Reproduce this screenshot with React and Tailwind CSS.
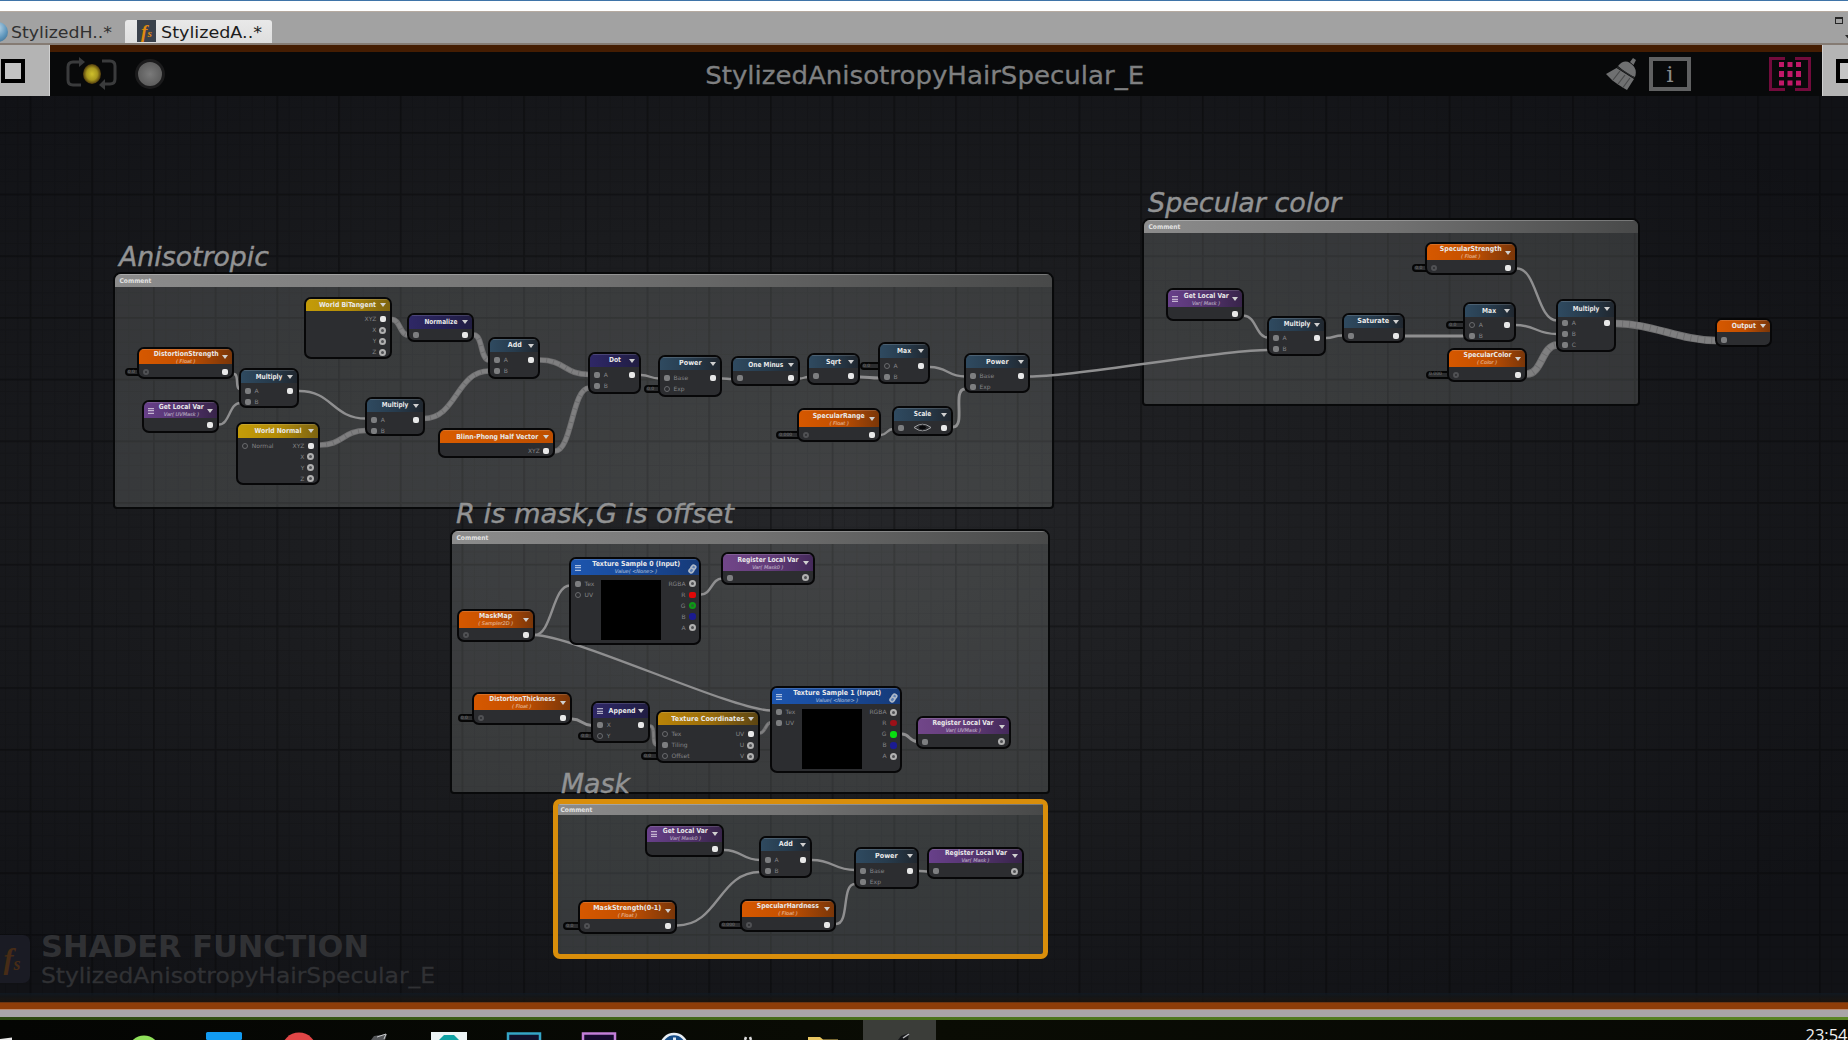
import { useLayoutEffect, useRef } from 'react';

/* Text squeezed or stretched horizontally to an exact width. */
function FitText({ w, origin = 'center', className = '', children }) {
  const inner = useRef(null);
  useLayoutEffect(() => {
    inner.current.style.transform = 'none';
    const real = inner.current.getBoundingClientRect().width;
    if (real) inner.current.style.transform = `scaleX(${w / real})`;
  }, [w]);
  return (
    <span
      style={{ width: w }}
      className={`flex shrink-0 whitespace-nowrap leading-none ${origin === 'left' ? 'justify-start' : 'justify-center'} ${className}`}
    >
      <span ref={inner} className={`block shrink-0 ${origin === 'left' ? 'origin-left' : 'origin-center'}`}>
        {children}
      </span>
    </span>
  );
}

const HEADS = {
  orange: 'bg-linear-to-r from-[#d65800] via-[#c45000] to-[#7a3608]',
  bright: 'bg-linear-to-r from-[#d95c00] to-[#bd4e00]',
  yellow: 'bg-linear-to-r from-[#c49c08] via-[#b38c08] to-[#7d6410]',
  gold: 'bg-linear-to-r from-[#b98409] via-[#9c6e0a] to-[#5c4512]',
  purple: 'bg-linear-to-r from-[#68408a] via-[#54346f] to-[#38244a]',
  violet: 'bg-linear-to-r from-[#714689] via-[#643d7a] to-[#44295a]',
  navy: 'bg-linear-to-r from-[#2f2866] via-[#272256] to-[#211d42]',
  slate: 'bg-linear-to-r from-[#2f4a60] via-[#273c4e] to-[#20272f]',
  blue: 'bg-linear-to-r from-[#1d55ae] via-[#184a99] to-[#163a78]',
};

/* Port kinds: f = connected input, o = open input, d = dim open input, s = connected output, r = open output */
const PORTS = {
  f: 'h-[6px] w-[6px] rounded-[2px] bg-[#7d7e80]',
  o: 'h-[6px] w-[6px] rounded-full border-[1.5px] border-[#6a6b6e]',
  d: 'h-[6px] w-[6px] rounded-full border-2 border-[#505154]',
  s: 'h-[6px] w-[6px] rounded-[2px] bg-[#e8e8e8]',
  r: 'h-[7px] w-[7px] rounded-full border-2 border-[#b0b0b0] bg-[#505154]',
  red: 'h-[6px] w-[7px] rounded-[2px] bg-[#e00808]',
  dred: 'h-[6px] w-[7px] rounded-full bg-[#9c1018]',
  grn: 'h-[7px] w-[7px] rounded-full border-2 border-[#0c9a16] bg-[#2a662c]',
  bgrn: 'h-[7px] w-[7px] rounded-[3px] bg-[#08dd10]',
  blu: 'h-[7px] w-[7px] rounded-[3px] bg-[#1b1b92]',
};

const N = (x0, y0, x1, y1, hb, head, title, tw, o = {}) => ({ x0, y0, x1, y1, hb, head, title, tw, ...o });
const AB = [['f', 'A'], ['f', 'B']];
const S = [['s']];
const texOut = (r, g) => [['r', 'RGBA'], [r, 'R'], [g, 'G'], ['blu', 'B'], ['r', 'A']];

const NODES = [
  N(137.3, 347, 234.3, 378.7, 364, 'orange', 'DistortionStrength', 65, { sub: '( Float )', ins: [['d']], outs: S, stub: [12.5, 0] }),
  N(141.7, 400, 219.3, 432.7, 418, 'purple', 'Get Local Var', 45, { sub: 'Var( UVMask )', menu: 1, outs: S, first: 7 }),
  N(239, 368.3, 299, 408, 383.3, 'slate', 'Multiply', 26.5, { ins: AB, outs: S }),
  N(236.3, 422.3, 320, 484.7, 437.7, 'yellow', 'World Normal', 47, { ins: [['o', 'Normal']], outs: [['s', 'XYZ'], ['r', 'X'], ['r', 'Y'], ['r', 'Z']] }),
  N(303.7, 296.7, 392, 359, 311.3, 'yellow', 'World BiTangent', 57, { outs: [['s', 'XYZ'], ['r', 'X'], ['r', 'Y'], ['r', 'Z']] }),
  N(365.3, 396.7, 424.7, 436.3, 411.7, 'slate', 'Multiply', 26.5, { ins: AB, outs: S }),
  N(407.3, 312.7, 473.7, 342, 328.7, 'navy', 'Normalize', 33, { ins: [['f']], outs: S, first: 6.5 }),
  N(488.3, 336.7, 540.3, 378.7, 352, 'slate', 'Add', 14, { ins: AB, outs: S }),
  N(588.3, 351.7, 640.7, 393.7, 367, 'navy', 'Dot', 12, { ins: AB, outs: S }),
  N(438.3, 428, 555.3, 458, 443.3, 'bright', 'Blinn-Phong Half Vector', 82, { outs: [['s', 'XYZ']], first: 7.3 }),
  N(658, 354.7, 722, 397, 370, 'slate', 'Power', 22.5, { ins: [['f', 'Base'], ['o', 'Exp']], outs: S, stub: [14, 1] }),
  N(731, 356, 800, 386, 371.3, 'slate', 'One Minus', 35, { ins: [['f']], outs: S, first: 7 }),
  N(807.3, 353, 860, 384.7, 368.3, 'slate', 'Sqrt', 15, { ins: [['f']], outs: S }),
  N(878, 342.3, 930.3, 384.3, 357.7, 'slate', 'Max', 14, { ins: [['o', 'A'], ['f', 'B']], outs: S, stub: [18, 0], first: 8.8 }),
  N(964, 353, 1029.7, 393.3, 368.3, 'slate', 'Power', 22.5, { ins: [['f', 'Base'], ['f', 'Exp']], outs: S }),
  N(797.3, 408.3, 881, 441.7, 427, 'orange', 'SpecularRange', 52, { sub: '( Float )', ins: [['d']], outs: S, stub: [21, 0] }),
  N(892, 405.7, 953, 435.7, 420.7, 'slate', 'Scale', 17.5, { ins: [['f']], outs: S, eye: 1, first: 7.3 }),

  N(1166, 288.3, 1244, 321.3, 307, 'purple', 'Get Local Var', 45, { sub: 'Var( Mask )', menu: 1, outs: S, first: 7 }),
  N(1267, 315.7, 1326.3, 356, 331.3, 'slate', 'Multiply', 26.5, { ins: AB, outs: S, first: 7 }),
  N(1341.7, 312.7, 1405, 342.7, 328, 'slate', 'Saturate', 32, { ins: [['f']], outs: S }),
  N(1424.7, 242.3, 1517, 274.7, 260.3, 'orange', 'SpecularStrength', 62, { sub: '( Float )', ins: [['d']], outs: S, stub: [12.5, 0], first: 7.5 }),
  N(1463.3, 302.3, 1515.7, 342, 317.3, 'slate', 'Max', 14, { ins: [['o', 'A'], ['f', 'B']], outs: S, stub: [17, 0] }),
  N(1447, 348.3, 1527.3, 381.7, 366.7, 'orange', 'SpecularColor', 48, { sub: '( Color )', ins: [['d']], outs: S, stub: [21, 0] }),
  N(1556.3, 299, 1616, 352, 316.7, 'slate', 'Multiply', 26.5, { ins: [['f', 'A'], ['f', 'B'], ['f', 'C']], outs: S, first: 6.3 }),
  N(1715.3, 317.7, 1771.7, 346.7, 332.3, 'orange', 'Output', 24, { ins: [['f']] }),

  N(456.7, 609.3, 534.7, 642.3, 627.7, 'orange', 'MaskMap', 33, { sub: '( Sampler2D )', ins: [['d']], outs: S, first: 7 }),
  N(569, 557, 701, 645.3, 575.3, 'blue', 'Texture Sample 0 (Input)', 88, { sub: 'Value( <None> )', menu: 1, link: 1, img: 1, ins: [['f', 'Tex'], ['o', 'UV']], outs: texOut('red', 'grn'), first: 8.7 }),
  N(720.7, 552.3, 815, 585.3, 571, 'violet', 'Register Local Var', 61, { sub: 'Var( Mask0 )', ins: [['f']], outs: [['r']], first: 7 }),
  N(471.7, 692, 572, 725, 710, 'orange', 'DistortionThickness', 66, { sub: '( Float )', ins: [['d']], outs: S, stub: [14, 0] }),
  N(591.3, 701, 650, 743.3, 718.3, 'navy', 'Append', 27, { menu: 1, ins: [['f', 'X'], ['o', 'Y']], outs: S, stub: [13, 1], first: 6.8 }),
  N(656, 710.3, 759.7, 762.7, 725.3, 'gold', 'Texture Coordinates', 73, { ins: [['o', 'Tex'], ['f', 'Tiling'], ['o', 'Offset']], outs: [['s', 'UV'], ['r', 'U'], ['r', 'V']], stub: [15, 2], first: 8.8 }),
  N(770, 686, 902, 773.3, 704, 'blue', 'Texture Sample 1 (Input)', 88, { sub: 'Value( <None> )', menu: 1, link: 1, img: 1, ins: [['f', 'Tex'], ['f', 'UV']], outs: texOut('dred', 'bgrn') }),
  N(915.7, 716, 1011, 749.3, 734, 'violet', 'Register Local Var', 61, { sub: 'Var( UVMask )', ins: [['f']], outs: [['r']], first: 7.5 }),

  N(645.3, 823.7, 723.7, 857, 842.3, 'purple', 'Get Local Var', 45, { sub: 'Var( Mask0 )', menu: 1, outs: S, first: 7 }),
  N(759, 835.7, 812, 878.3, 851.3, 'slate', 'Add', 14, { ins: AB, outs: S, first: 8.6 }),
  N(854.3, 846.7, 918.7, 889.3, 862.7, 'slate', 'Power', 22.5, { ins: [['f', 'Base'], ['f', 'Exp']], outs: S }),
  N(927.3, 846.7, 1023.7, 878.7, 863.3, 'purple', 'Register Local Var', 62, { sub: 'Var( Mask )', ins: [['f']], outs: [['r']] }),
  N(578.3, 900, 676.7, 934, 919, 'orange', 'MaskStrength(0-1)', 68, { sub: '( Float )', ins: [['d']], outs: S, stub: [15, 0], first: 7 }),
  N(740, 898.7, 836, 932.3, 917.3, 'orange', 'SpecularHardness', 62, { sub: '( Float )', ins: [['d']], outs: S, stub: [21, 0] }),
];

/* x1, y1, x2, y2, thickness, optional curve strength */
const WIRES = [
  [234, 374, 240, 389, 2], [219, 424.5, 240, 403, 2], [299, 391, 366, 418.5, 2],
  [320, 445, 366, 430.5, 6], [392, 319.5, 408, 335, 6], [424, 418.5, 489, 371, 6],
  [474, 335, 489, 360, 6], [540, 360, 589, 374.5, 6], [555, 451, 589, 388, 6],
  [641, 375, 659, 378.5, 2], [722, 378.5, 732, 379, 2], [800, 378.5, 808, 377, 2],
  [860, 377, 879, 378, 2.5], [930, 367, 965, 376.5, 2], [881, 435, 893, 429, 2],
  [953, 427, 965, 389, 2.5], [1029, 376.5, 1268, 350, 2, 0.22], [1244, 315.7, 1268, 337.5, 2],
  [1326, 338, 1342, 335.5, 2], [1405, 336, 1464, 336, 2.4], [1517, 268.5, 1557, 320.5, 2],
  [1515, 325, 1557, 334, 2], [1527, 374, 1557, 345, 8], [1616, 323.5, 1716, 340.5, 8, 0.36],
  [534.5, 635, 570, 585.5, 2], [534.5, 635, 771, 710.5, 2, 0.16], [701, 594.5, 722, 578.5, 2],
  [572, 719, 592, 725.5, 2.4], [650, 726, 657, 745, 4], [760, 733, 771, 722.5, 4],
  [902, 734, 917, 741.5, 2.4], [724, 850, 760, 860, 2], [812, 860, 855, 870, 2],
  [677, 925.5, 760, 872, 2], [836, 924, 855, 884, 2], [919, 871, 929, 871.5, 2],
];

function Wires() {
  return (
    <svg className="absolute left-0 top-0 h-[1040px] w-[1848px]" viewBox="0 0 1848 1040" fill="none">
      {WIRES.map(([a, b, c, d, t, s = 0.5], i) => {
        const k = Math.max((c - a) * s, Math.min(Math.abs(d - b) * 0.35, 14));
        const p = `M${a} ${b}C${a + k} ${b} ${c - k} ${d} ${c} ${d}`;
        return t >= 4 ? (
          <g key={i}>
            <path d={p} stroke="#6e6e6f" strokeWidth={t - 0.3} />
            <path d={p} stroke="#7f7f80" strokeWidth={t - 2} strokeDasharray="6 1" />
          </g>
        ) : (
          <path key={i} d={p} stroke="#8f8f90" strokeWidth={t + 0.4} />
        );
      })}
    </svg>
  );
}

function Port({ kind, label, right }) {
  return (
    <div className={`flex h-[11px] items-center gap-[3px] ${right ? 'flex-row-reverse' : ''}`}>
      <span className="flex w-[7px] justify-center">
        <span className={`block ${PORTS[kind]}`} />
      </span>
      {label && <span className="text-[6px] leading-none text-[#838487]">{label}</span>}
    </div>
  );
}

function Node({ n }) {
  const { x0, y0, x1, y1, hb, first = 8 } = n;
  return (
    <div className="absolute" style={{ left: x0, top: y0, width: x1 - x0, height: y1 - y0 }}>
      {n.stub && (
        <div
          className="absolute right-full mr-[-3px] flex h-[8px] items-center rounded-l-[4px] border-2 border-[#060606] bg-[#2c2d2f] pl-[1px] text-[4.5px] leading-none text-[#77787a]"
          style={{ width: n.stub[0] + 3, top: hb - y0 + first - 4 + n.stub[1] * 11 }}
        >
          {n.stub[0] > 18 ? '0.000' : '0.0'}
        </div>
      )}
      <div className="relative flex h-full flex-col overflow-hidden rounded-[7px] border-2 border-[#070708] bg-[#2c2d30]">
        <div
          className={`flex shrink-0 items-center justify-center border-t border-white/15 ${HEADS[n.head]}`}
          style={{ height: hb - y0 - 2 }}
        >
          {n.menu && (
            <span className="absolute left-[4px] flex h-[6px] w-[6px] flex-col justify-between bg-white/15">
              <i className="h-px bg-white/55" />
              <i className="h-px bg-white/55" />
              <i className="h-px bg-white/55" />
            </span>
          )}
          <div className={`flex flex-col items-center ${n.menu ? 'pl-[2px]' : ''}`}>
            <FitText w={n.tw} className="text-[7px] font-bold text-[#e9e9e9]">{n.title}</FitText>
            {n.sub && <span className="text-[5px] italic leading-[6px] text-white/65">{n.sub}</span>}
          </div>
          {n.link ? (
            <svg className="absolute right-[2px] top-[5px] h-[10px] w-[9px]" viewBox="0 0 9 10" fill="#5c7fb4" stroke="#aeb9c8" strokeWidth="1.6">
              <rect x="3.4" y="1.2" width="4" height="4.6" rx="1.6" transform="rotate(38 5.4 3.5)" />
              <rect x="1.4" y="4.2" width="4" height="4.6" rx="1.6" transform="rotate(38 3.4 6.5)" />
            </svg>
          ) : (
            <svg className="absolute right-[4px] h-[4px] w-[6px]" viewBox="0 0 6 4">
              <path d="M0 0H6L3 4Z" fill="#d0d0d0" />
            </svg>
          )}
        </div>
        <div className="flex grow justify-between px-[3.5px]" style={{ paddingTop: first - 5.5 }}>
          <div>{(n.ins || []).map(([k, l], i) => <Port key={i} kind={k} label={l} />)}</div>
          {n.eye && (
            <svg className="mt-[1px] h-[9px] w-[19px]" viewBox="0 0 19 9" fill="none" stroke="#a5a6a8">
              <path d="M1 4.5Q9.500 -2 18 4.500Q9.500 11 1 4.500Z" />
              <ellipse cx="9.500" cy="4.500" rx="4" ry="2.500" fill="#08080a" stroke="#303134" />
            </svg>
          )}
          {n.img && <div className="mt-[2px] h-[60px] w-[60px] bg-black" />}
          <div>{(n.outs || []).map(([k, l], i) => <Port key={i} kind={k} label={l} right />)}</div>
        </div>
      </div>
    </div>
  );
}

const GROUPS = [
  { x: 113, y: 272, w: 941, h: 237, hh: 15, title: 'Anisotropic', tw: 150 },
  { x: 1142, y: 218, w: 498, h: 188, hh: 15, title: 'Specular color', tw: 193 },
  { x: 450, y: 529, w: 600, h: 265, hh: 15, title: 'R is mask,G is offset', tw: 278 },
  { x: 553, y: 799, w: 495, h: 160, hh: 16, title: 'Mask', tw: 69, active: true },
];

function Group({ g }) {
  return (
    <div className="absolute" style={{ left: g.x, top: g.y, width: g.w, height: g.h }}>
      <div
        className={`flex h-full flex-col overflow-hidden ${
          g.active
            ? 'rounded-[7px] border-[5px] border-[#d98e0b] bg-[#c8d0cc]/18'
            : 'rounded-t-[8px] rounded-b-[4px] border-2 border-[#08090a] bg-[#d2d6d2]/17'
        }`}
      >
        <div
          className={`flex shrink-0 items-center border-t border-white/25 bg-linear-to-r from-[#8c8c8c] via-[#727272] to-[#484949] ${g.active ? 'pl-[2px]' : 'pl-[4px]'}`}
          style={{ height: g.active ? g.hh - 5 : g.hh - 2 }}
        >
          <FitText w={32} className="text-[6.5px] font-bold text-[#e2e2e2]">Comment</FitText>
        </div>
      </div>
      <div className={`absolute bottom-full h-[32px] ${g.active ? 'left-[8px] mb-[-4px]' : 'left-[5.500px] mb-[-4px]'}`}>
        <FitText w={g.tw} origin="left" className="text-[26px] italic text-[#929394] [-webkit-text-stroke:0.4px_#929394]">{g.title}</FitText>
      </div>
    </div>
  );
}

function Grid() {
  return (
    <svg className="absolute left-0 top-0 h-[1040px] w-[1848px]">
      <defs>
        <pattern id="minor" x="29.6" y="8.5" width="12.34" height="12.34" patternUnits="userSpaceOnUse">
          <path d="M0.500 0V12.34M0 0.500H12.34" stroke="#000" strokeOpacity=".11" />
        </pattern>
        <pattern id="major" x="29.6" y="8.5" width="61.7" height="61.7" patternUnits="userSpaceOnUse">
          <path d="M1 0V61.7M0 1H61.7" stroke="#000" strokeOpacity=".24" strokeWidth="2" />
        </pattern>
      </defs>
      <rect width="1848" height="1040" fill="url(#minor)" />
      <rect width="1848" height="1040" fill="url(#major)" />
    </svg>
  );
}

function FsGlyph({ className }) {
  return (
    <span className={`flex items-center justify-center font-['Liberation_Serif',serif] font-bold italic leading-none ${className}`}>
      f<span className="mt-[0.5em] text-[0.6em]">s</span>
    </span>
  );
}

function TabBar() {
  return (
    <div className="flex h-[32px] shrink-0 items-end justify-between border-t border-[#b5aaa0] bg-[#a2a2a2]">
      <div className="flex h-[23px] items-center">
        <span className="-ml-[14px] h-[20px] w-[22px] rounded-full bg-radial-[at_55%_30%] from-[#b9d4e6] via-[#5f97bd] to-[#2d5674]" />
        <FitText w={101} origin="left" className="ml-[3px] pt-[2px] text-[16px] text-[#303030]">StylizedH..*</FitText>
        <div className="ml-[13px] flex h-[23px] w-[147px] items-center rounded-t-[3px] bg-linear-to-b from-[#e9e9e9] to-[#dedede] pl-[12px]">
          <FsGlyph className="-mt-[1px] h-[22px] w-[19px] bg-[#3a414b] text-[19px] text-[#e08a10]" />
          <FitText w={101} origin="left" className="ml-[5px] pt-[2px] text-[16px] text-[#1c1c1c]">StylizedA..*</FitText>
        </div>
      </div>
      <div className="flex h-[32px] w-[13px] flex-col pt-[6px]">
        <span className="h-[7px] w-[8px] border border-t-2 border-[#262626]" />
        <svg className="mt-[11px] ml-[10px] h-[4px] w-[7px]" viewBox="0 0 7 4"><path d="M0 0H7L3.500 4Z" fill="#262626" /></svg>
      </div>
    </div>
  );
}

function Toolbar() {
  return (
    <div className="relative z-10 flex h-[51px] shrink-0 items-start">
      <div className="flex h-[51px] w-[50px] shrink-0 border-r border-[#d0d0d0] bg-[#b4b4b4] pl-[1px] pt-[14px]">
        <span className="h-[24px] w-[24px] border-4 border-black bg-[#c4c4c4]" />
      </div>
      <div className="flex h-[51px] grow items-center border-t-[7px] border-[#451d02] bg-[#08090a]">
        <svg className="ml-[14px] h-[34px] w-[56px]" viewBox="0 0 56 34" fill="none" stroke="#3a3b3c" strokeWidth="3">
          <path d="M17 28H9Q4 28 4 23V10Q4 5 9 5H17" />
          <path d="M15 0L21 5L15 10Z" fill="#3a3b3c" stroke="none" />
          <path d="M38 4H46Q51 4 51 9V22Q51 27 46 27H40" />
          <path d="M41 22L35 28L41 33Z" fill="#3a3b3c" stroke="none" />
          <defs>
            <radialGradient id="sun">
              <stop offset="0" stopColor="#cfc02c" />
              <stop offset=".6" stopColor="#a8981f" />
              <stop offset="1" stopColor="#4f3a0c" />
            </radialGradient>
          </defs>
          <ellipse cx="28" cy="17" rx="9" ry="10" fill="url(#sun)" stroke="none" />
        </svg>
        <span className="ml-[15px] h-[30px] w-[30px] rounded-full border-[3px] border-[#1b1b1c] bg-radial from-[#7a7a7a] to-[#525252]" />
        <div className="flex grow justify-center pt-[3px] pl-[78px]">
          <FitText w={439} className="text-[25px] text-[#7f8081] [-webkit-text-stroke:0.3px_#7f8081]">StylizedAnisotropyHairSpecular_E</FitText>
        </div>
        <svg className="h-[34px] w-[31px]" viewBox="0 0 31 34" fill="#6f7071">
          <path d="M24 5L27 1L30 3L27.500 8Z" />
          <path d="M12 9Q18 2 24 6Q32 11 29 20Q22 18 12 9Z" />
          <path d="M10.500 11L28 22L21 33L17.500 31L12 27.500L6.500 23.500L0 17Z" />
          <path d="M11 10L28.500 21" stroke="#2a2b2c" strokeWidth="1.200" />
          <path d="M7 23L14 14M12 27L19 18M17 30.500L24 21" stroke="#4a4b4c" strokeWidth="1.200" />
        </svg>
        <div className="ml-[12px] flex h-[34px] w-[42px] items-center justify-center border-4 border-[#606162] font-['DejaVu_Serif',serif] text-[23px] leading-none text-[#8a8b8c]">
          i
        </div>
        <svg className="mr-[11px] ml-[78px] h-[34px] w-[42px]" viewBox="0 0 42 34">
          <path d="M16 1.500H1.500V32.500H16M26 1.500H40.500V32.500H26" fill="none" stroke="#720b3c" strokeWidth="3" />
          <g fill="#c01868">
            <rect x="10" y="5" width="5" height="5" /><rect x="18.500" y="5" width="5" height="5" /><rect x="27" y="5" width="5" height="5" />
            <rect x="10" y="14" width="5" height="6" /><rect x="18.500" y="14" width="5" height="6" /><rect x="27" y="14" width="5" height="6" />
            <rect x="10" y="23.500" width="5" height="5" /><rect x="18.500" y="23.500" width="5" height="5" /><rect x="27" y="23.500" width="5" height="5" />
          </g>
        </svg>
      </div>
      <div className="flex h-[51px] w-[26px] shrink-0 overflow-hidden border-l border-[#d0d0d0] bg-[#b4b4b4] pl-[13px] pt-[14px]">
        <span className="h-[24px] w-[24px] shrink-0 border-4 border-black bg-[#c4c4c4]" />
      </div>
    </div>
  );
}

function Taskbar() {
  return (
    <div className="h-[20px] shrink-0 overflow-hidden bg-linear-to-r from-[#040503] via-[#0a0c04] to-[#070804]">
      <svg className="h-[20px] w-[1848px]" viewBox="0 1020 1848 20">
        <rect x="863" y="1020" width="73" height="20" fill="#3b3d39" />
        <path d="M0 1040V1039L12 1037.500V1040Z" fill="#e8e8e8" />
        <ellipse cx="144" cy="1049" rx="15" ry="13.500" fill="#8fe05a" />
        <rect x="206" y="1032" width="36" height="8" rx="1.500" fill="#129bf2" />
        <circle cx="299" cy="1050" r="17.500" fill="#e04646" />
        <path d="M371 1040L374 1036L387 1034L385 1040Z" fill="#55575a" />
        <path d="M377 1037L386 1034L384 1039" stroke="#c6c8ca" fill="none" />
        <rect x="431" y="1032" width="36" height="8" fill="#edf5f6" />
        <path d="M439 1040L444 1035H454L459 1040Z" fill="#11a3a5" />
        <rect x="508" y="1033.500" width="32" height="16" fill="#11112c" stroke="#35a5c6" strokeWidth="2.500" />
        <rect x="583" y="1033.500" width="32" height="16" fill="#160a2e" stroke="#c37fd8" strokeWidth="2.500" />
        <circle cx="674" cy="1047" r="13" fill="#164c87" stroke="#e8eef4" strokeWidth="2.500" />
        <path d="M673 1040V1037.500H676V1040" fill="#dfe8f0" />
        <path d="M745 1040L746 1037M751 1040L750 1037" stroke="#dcdcdc" strokeWidth="2.500" />
        <path d="M808 1040V1037H820L823 1039.500H838V1040Z" fill="#e8c661" />
        <path d="M898 1040L901 1036L909 1033L908 1040Z" fill="#17181a" />
        <path d="M903 1038L909 1034" stroke="#b5b7b9" strokeWidth="1.500" />
        <text x="1805.500" y="1041" fontFamily="Open Sans" fontSize="17" fill="#f0f0f0" textLength="42" lengthAdjust="spacingAndGlyphs">23:54</text>
      </svg>
    </div>
  );
}

export default function App() {
  return (
    <div className="flex h-[1040px] w-[1848px] flex-col overflow-hidden bg-white font-['DejaVu_Sans',sans-serif]">
      <div className="h-[11px] shrink-0 border-t border-[#3f74a8] bg-white" />
      <TabBar />
      <div className="h-[2px] shrink-0 bg-[#857b73]" />
      <main className="relative flex h-[964px] shrink-0 flex-col overflow-hidden bg-radial-[at_45%_50%] from-[#252629] via-[#1a1b1e] via-45% to-[#111216] to-85%">
        <div className="absolute left-0 top-[-45px] h-[1040px] w-[1848px]">
          <Grid />
          {GROUPS.map((g) => <Group key={g.title} g={g} />)}
          <Wires />
          {NODES.map((n, i) => <Node key={i} n={n} />)}
        </div>
        <Toolbar />
        <div className="grow" />
        <div className="relative flex h-[56px] shrink-0 items-center">
          <FsGlyph className="-ml-[6px] h-[48px] w-[36px] rounded-[7px] bg-[#1a1b24] text-[30px] text-[#472c16]" />
          <div className="ml-[11px] flex flex-col gap-[4px]">
            <FitText w={328} origin="left" className="text-[30px] font-bold text-[#303134]">SHADER FUNCTION</FitText>
            <FitText w={394} origin="left" className="text-[21px] text-[#303134] [-webkit-text-stroke:0.3px_#303134]">StylizedAnisotropyHairSpecular_E</FitText>
          </div>
        </div>
        <div className="relative mt-[6px] h-[9px] shrink-0 bg-linear-to-b from-[#101a24]/70 to-[#1c140c]/80" />
        <div className="relative h-[7px] shrink-0 border-t border-[#6b3411] bg-[#8e3d08]" />
      </main>
      <div className="h-[8px] shrink-0 border-t border-[#b88a70] bg-[#a9a5a8]" />
      <div className="h-[3px] shrink-0 bg-linear-to-r from-[#2b4610] via-[#4b731c] to-[#5a8524]" />
      <Taskbar />
    </div>
  );
}
